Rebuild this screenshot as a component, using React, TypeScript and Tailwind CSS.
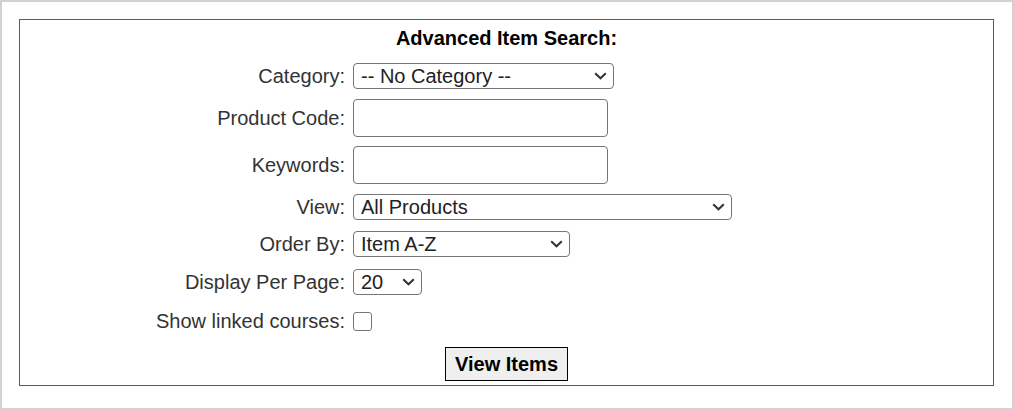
const Chevron = () => (
  <svg
    className="pointer-events-none absolute right-[7px] top-1/2 -translate-y-1/2"
    width="13"
    height="8"
    viewBox="0 0 13 8"
    fill="none"
  >
    <path d="M1.2 1.2 L6.5 6.3 L11.8 1.2" stroke="#333" strokeWidth="2" />
  </svg>
)

const Select = ({ value, width }: { value: string; width: string }) => (
  <div className={`relative h-[26px] ${width}`}>
    <select
      defaultValue={value}
      className="h-full w-full appearance-none rounded-[4px] border border-[#767676] bg-white pl-[7px] text-[20px] leading-[24px] text-[#222]"
    >
      <option>{value}</option>
    </select>
    <Chevron />
  </div>
)

const Row = ({ label, className, children }: { label: string; className: string; children: any }) => (
  <div className={`flex items-center ${className}`}>
    <label className="w-[325px] text-right text-[20px] leading-[24px] text-[#333]">{label}</label>
    <div className="ml-[8px] flex items-center">{children}</div>
  </div>
)

const App = () => {
  return (
    <div
      className="h-[410px] w-[1014px] border-2 border-[#d2d2d2] bg-white py-[17px] pl-[17px] pr-[18px]"
      style={{ fontFamily: '"Liberation Sans", Arial, sans-serif' }}
    >
      <div className="flex h-[367px] flex-col border border-[#4b5a8c] bg-white">
        <h1 className="mt-[7px] h-[22px] text-center text-[20px] font-bold leading-[22px] text-black">
          Advanced Item Search:
        </h1>

        <Row label="Category:" className="mt-[14px] h-[26px]">
          <Select value="-- No Category --" width="w-[261px]" />
        </Row>

        <Row label="Product Code:" className="mt-[10px] h-[38px]">
          <input
            type="text"
            className="h-[38px] w-[255px] rounded-[4px] border border-[#767676] bg-white px-2 text-[20px]"
          />
        </Row>

        <Row label="Keywords:" className="mt-[9px] h-[38px]">
          <input
            type="text"
            className="h-[38px] w-[255px] rounded-[4px] border border-[#767676] bg-white px-2 text-[20px]"
          />
        </Row>

        <Row label="View:" className="mt-[10px] h-[26px]">
          <Select value="All Products" width="w-[379px]" />
        </Row>

        <Row label="Order By:" className="mt-[11px] h-[26px]">
          <Select value="Item A-Z" width="w-[217px]" />
        </Row>

        <Row label="Display Per Page:" className="mt-[12px] h-[26px]">
          <Select value="20" width="w-[69px]" />
        </Row>

        <Row label="Show linked courses:" className="mt-[13px] h-[26px]">
          <input
            type="checkbox"
            className="h-[19px] w-[19px] appearance-none rounded-[3px] border-[1.5px] border-[#767676] bg-white"
          />
        </Row>

        <div className="mt-[13px] flex justify-center">
          <button className="h-[34px] w-[123px] border border-black bg-[#efefef] text-[20px] font-bold leading-[24px] text-black">
            View Items
          </button>
        </div>
      </div>
    </div>
  )
}

export default App
